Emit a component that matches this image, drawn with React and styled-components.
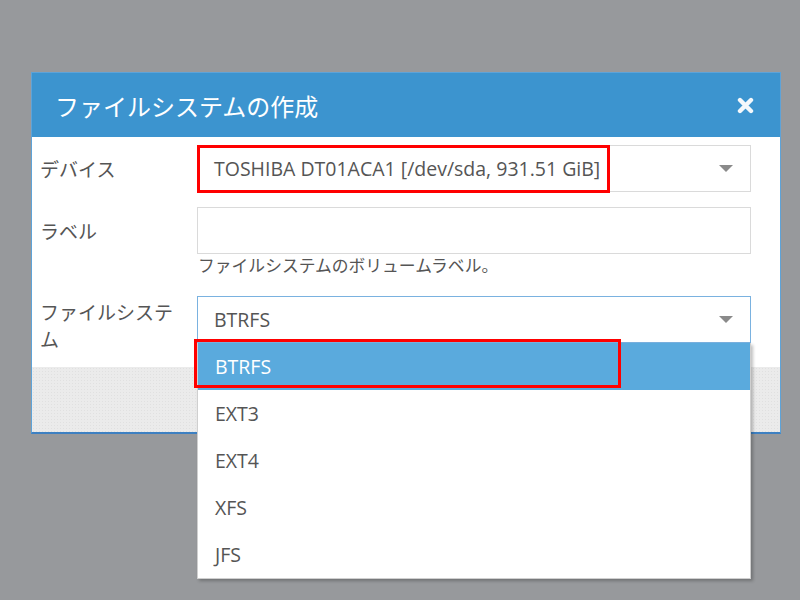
import React from 'react';
import styled, { createGlobalStyle } from 'styled-components';

const GlobalStyle = createGlobalStyle`
    html, body {
        margin: 0;
        padding: 0;
    }
    body {
        background: #97999c;
        font-family: "Open Sans", "Noto Sans CJK JP", sans-serif;
        color: #555;
    }
`

const Backdrop = styled.div`
    height: 600px;
    overflow: hidden;
    padding-top: 72px;
    padding-left: 31px;
    box-sizing: border-box;
`

const Dialog = styled.div`
    width: 750px;
    box-sizing: border-box;
    background: #fff;
    border: 1px solid #5ea3d8;
    border-bottom: 2px solid #3d80c2;
`

const Header = styled.div`
    height: 64px;
    background: #3c94cf;
    display: flex;
    align-items: center;
    justify-content: space-between;
    padding: 0 26px 0 23px;
`

const Title = styled.h2`
    margin: 0;
    font-family: "Open Sans", "Noto Sans CJK JP", sans-serif;
    font-size: 24px;
    font-weight: 400;
    color: #fff;
`

const CloseButton = styled.button`
    border: none;
    background: none;
    padding: 0;
    width: 17px;
    height: 17px;
    display: flex;
    cursor: pointer;
`

const Body = styled.div`
    padding: 8px 29px 13px 8px;
    display: flex;
    flex-direction: column;
`

const Row = styled.div`
    display: grid;
    grid-template-columns: 157px 554px;
    align-items: start;
    margin-top: ${p => p.gap || 0}px;
`

const Label = styled.label`
    font-size: 19px;
    line-height: 27px;
    padding-top: ${p => p.top}px;
    padding-right: 14px;
    color: #555;
`

const Field = styled.div`
    display: flex;
    flex-direction: column;
    position: relative;
`

const SelectBox = styled.div`
    position: relative;
    height: 47px;
    box-sizing: border-box;
    border: 1px solid ${p => p.focused ? '#7ab2e0' : '#dadada'};
    display: flex;
    align-items: center;
    padding-left: 16px;
    font-size: 19.5px;
    color: #555;
    background: #fff;
`

const Caret = styled.span`
    position: absolute;
    right: 17px;
    top: 50%;
    margin-top: -4px;
    width: 0;
    height: 0;
    border-left: 7px solid transparent;
    border-right: 7px solid transparent;
    border-top: 7px solid #8a8a8a;
`

const TextInput = styled.div`
    height: 47px;
    box-sizing: border-box;
    border: 1px solid #dadada;
`

const Help = styled.div`
    font-size: 16.8px;
    line-height: 24px;
    padding-left: 1px;
    color: #555;
`

const Highlight = styled.div`
    position: absolute;
    top: ${p => p.top}px;
    left: ${p => p.left}px;
    width: ${p => p.w}px;
    height: ${p => p.h}px;
    box-sizing: border-box;
    border: 3px solid #f00;
    pointer-events: none;
`

const Menu = styled.ul`
    position: absolute;
    top: 100%;
    left: 0;
    right: 0;
    margin: 0;
    padding: 0;
    list-style: none;
    background: #fff;
    border: 1px solid #cfcfcf;
    border-top: none;
    box-shadow: 2px 2px 3px rgba(0, 0, 0, 0.25);
    z-index: 5;
`

const MenuItem = styled.li`
    position: relative;
    height: 47px;
    display: flex;
    align-items: center;
    padding-left: 17px;
    font-size: 19.5px;
    color: ${p => p.active ? '#fff' : '#555'};
    background: ${p => p.active ? '#5aaadd' : '#fff'};
`

const Footer = styled.div`
    height: 65px;
    background-color: #ebebeb;
    background-image: radial-gradient(#e0e0e0 0.6px, transparent 0.8px);
    background-size: 3px 3px;
`

const CloseIcon = () => (
    <svg width="17" height="17" viewBox="0 0 17 17">
        <path d="M3 3 L14 14 M14 3 L3 14" stroke="#f4f8fb" strokeWidth="4.4" strokeLinecap="round" />
    </svg>
)

const filesystems = ['BTRFS', 'EXT3', 'EXT4', 'XFS', 'JFS']

const App = () => (
    <>
        <GlobalStyle />
        <Backdrop>
            <Dialog>
                <Header>
                    <Title>ファイルシステムの作成</Title>
                    <CloseButton><CloseIcon /></CloseButton>
                </Header>
                <Body>
                    <Row>
                        <Label top={12}>デバイス</Label>
                        <Field>
                            <SelectBox>
                                TOSHIBA DT01ACA1 [/dev/sda, 931.51 GiB]
                                <Caret />
                                <Highlight top={-1} left={-1} w={413} h={48} />
                            </SelectBox>
                        </Field>
                    </Row>
                    <Row gap={15}>
                        <Label top={12}>ラベル</Label>
                        <Field>
                            <TextInput />
                            <Help>ファイルシステムのボリュームラベル。</Help>
                        </Field>
                    </Row>
                    <Row gap={18}>
                        <Label top={4}>ファイルシステム</Label>
                        <Field>
                            <SelectBox focused>
                                BTRFS
                                <Caret />
                            </SelectBox>
                            <Menu>
                                {filesystems.map((fs, i) => (
                                    <MenuItem key={fs} active={i === 0}>
                                        {fs}
                                        {i === 0 && <Highlight top={-4} left={-4} w={427} h={49} />}
                                    </MenuItem>
                                ))}
                            </Menu>
                        </Field>
                    </Row>
                </Body>
                <Footer />
            </Dialog>
        </Backdrop>
    </>
)

export default App
